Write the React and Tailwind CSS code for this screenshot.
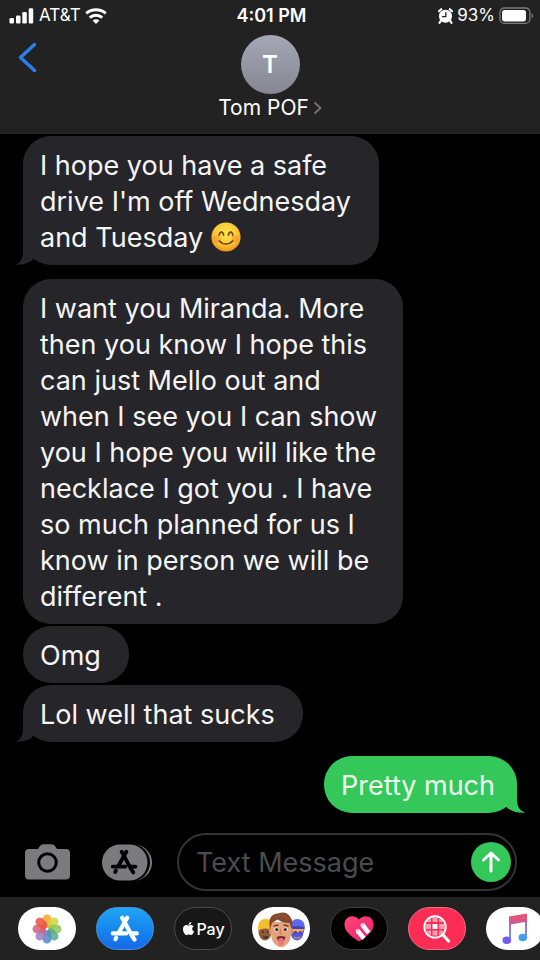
import { useState } from "react";
import { FaApple } from "react-icons/fa";

const messages = [
  {
    text: "I hope you have a safe\ndrive I'm off Wednesday\nand Tuesday ",
    emoji: true,
    tail: true,
    size: "w-[356px]",
    gap: "mt-0",
  },
  {
    text: "I want you Miranda. More\nthen you know I hope this\ncan just Mello out and\nwhen I see you I can show\nyou I hope you will like the\nnecklace I got you . I have\nso much planned for us I\nknow in person we will be\ndifferent .",
    size: "w-[380px]",
    gap: "mt-[14px]",
  },
  { text: "Omg", size: "w-[106px]", gap: "mt-0.5" },
  { text: "Lol well that sucks", tail: true, size: "w-[280px]", gap: "mt-0.5" },
  { text: "Pretty much", tail: true, mine: true, size: "w-[193px]", gap: "mt-[14px]" },
];

function SignalIcon() {
  return (
    <svg width="26" height="16" viewBox="0 0 26 16" fill="#fff" aria-hidden="true">
      <rect x="0.5" y="10" width="4.5" height="5.5" rx="1.3" />
      <rect x="7" y="7.5" width="4.5" height="8" rx="1.3" />
      <rect x="13.3" y="4" width="4.5" height="11.5" rx="1.3" />
      <rect x="19.7" y="0.3" width="4.5" height="15.2" rx="1.3" />
    </svg>
  );
}

function WifiIcon() {
  return (
    <svg width="22" height="16" viewBox="0 0 22 16" fill="none" stroke="#fff" strokeWidth="2.9" aria-hidden="true">
      <path d="M1.2 5.4C6.8.6 15.2.6 20.8 5.4" />
      <path d="M4.8 9.6c3.4-3.2 9-3.2 12.400 0" />
      <path d="M7.6 12.600c2-1.8 4.8-1.8 6.8 0L11 16z" fill="#fff" stroke="none" />
    </svg>
  );
}

function AlarmIcon() {
  return (
    <svg width="15" height="16" viewBox="0 0 15 16" aria-hidden="true">
      <circle cx="7.500" cy="8.200" r="6.500" fill="#fff" />
      <path d="M1 3.300 3.200 1.200M14 3.300l-2.200-2.100M2.800 12.800 1.600 14.800M12.200 12.800l1.200 2" stroke="#fff" strokeWidth="2.200" strokeLinecap="round" />
      <path d="M7.800 4.200v4.400H4" fill="none" stroke="#222" strokeWidth="1.300" />
    </svg>
  );
}

function BatteryIcon() {
  return (
    <svg width="35" height="18" viewBox="0 0 35 18" aria-hidden="true">
      <rect x="0.9" y="1" width="30" height="15.4" rx="4.4" fill="none" stroke="#7b7b7b" strokeWidth="1.3" />
      <rect x="3" y="3" width="24" height="11.4" rx="2.6" fill="#fff" />
      <path d="M32.6 6.2c2 .8 2 4.2 0 5z" fill="#7b7b7b" />
    </svg>
  );
}

function SmileEmoji() {
  return (
    <svg className="inline-block align-[-5px]" width="30" height="30" viewBox="0 0 30 30" role="img" aria-label="😊">
      <defs>
        <radialGradient id="face" cx="50%" cy="38%" r="62%">
          <stop offset="0" stopColor="#ffe64f" />
          <stop offset="0.6" stopColor="#fdca35" />
          <stop offset="1" stopColor="#ef9020" />
        </radialGradient>
      </defs>
      <circle cx="15" cy="15" r="14.6" fill="url(#face)" />
      <circle cx="5.8" cy="17" r="3.6" fill="#f58a35" opacity="0.5" />
      <circle cx="24.2" cy="17" r="3.6" fill="#f58a35" opacity="0.5" />
      <g fill="none" stroke="#7b4410" strokeWidth="1.7" strokeLinecap="round">
        <path d="M8.2 13.2c.5-4 3.8-4 4.4 0" />
        <path d="M17.4 13.2c.5-4 3.8-4 4.4 0" />
        <path d="M8.4 19c3.4 4 9.8 4 13.2 0" />
      </g>
    </svg>
  );
}

function Tail({ mine }) {
  return mine ? (
    <svg className="absolute -right-[8px] bottom-0" width="30" height="30" viewBox="0 0 30 30" aria-hidden="true">
      <path d="M22 0V16C22 23 24 27 30 29.700 23 30 17 28.500 13 25.500L5 16 12 0z" fill="#34c759" />
    </svg>
  ) : (
    <svg className="absolute -left-[7px] bottom-0" width="30" height="30" viewBox="0 0 30 30" aria-hidden="true">
      <path d="M7 0V16C7 23 5 27 0 29.700 6 29.800 12 28.500 16 25.500L24 16 18 0z" fill="#26252a" />
    </svg>
  );
}

function Bubble({ msg }) {
  const side = msg.mine
    ? "self-end bg-[#34c759] text-[#eefff1]"
    : "self-start bg-[#26252a] text-[#f5f5f6]";
  return (
    <div className={`relative max-w-full rounded-[28px] pl-[17px] pt-[12px] pb-[9px] ${side} ${msg.size} ${msg.gap}`}>
      {msg.tail && <Tail mine={msg.mine} />}
      <p className="relative whitespace-pre text-[27px] leading-[36px]">
        {msg.text}
        {msg.emoji && <SmileEmoji />}
      </p>
    </div>
  );
}

function StoreMark() {
  return (
    <g fill="none" strokeLinecap="round">
      <path d="M16.2 1.8 7.6 17" />
      <path d="M11.2 1.8 20.8 19.4 23.5 23.6" />
      <path d="M1.8 17.4h13.4M20.6 17.4h5.2" />
      <path d="M5.2 21.8 4.4 23.2" />
    </g>
  );
}

function CameraIcon() {
  return (
    <svg width="45" height="36" viewBox="0 0 45 36" aria-hidden="true">
      <path d="M4 5h9l2-3q1.3-1.7 3.2-1.7h8.6Q28.700.3 30 2l2 3h9q4 0 4 4v22q0 4.500-4 4.500H4q-4 0-4-4.500V9q0-4 4-4z" fill="#7b7b7d" />
      <circle cx="22.500" cy="18.500" r="8.800" fill="none" stroke="#000" strokeWidth="3" />
    </svg>
  );
}

function AppsIcon() {
  return (
    <svg width="51" height="37" viewBox="0 0 51 37" aria-hidden="true">
      <rect x="6" y="0.500" width="44" height="36" rx="18" fill="#7b7b7d" />
      <rect x="2" y="-0.500" width="46" height="38" rx="19" fill="#000" />
      <rect x="0" y="0.500" width="45.500" height="36" rx="18" fill="#7b7b7d" />
      <g transform="translate(9 6) scale(0.95)" stroke="#000" strokeWidth="4">
        <StoreMark />
      </g>
    </svg>
  );
}

const petals = ["#f6a623", "#d5d13c", "#8dc553", "#58ac8b", "#5489c7", "#9a7fc0", "#d2607f", "#ee5140"];

function PhotosIcon() {
  return (
    <svg width="32" height="32" viewBox="-16 -16 32 32" aria-hidden="true">
      {petals.map((color, i) => (
        <rect key={color} x="-4.300" y="-14.500" width="8.600" height="13.500" rx="4.300" fill={color} opacity="0.85" transform={`rotate(${i * 45})`} />
      ))}
      <circle r="1.300" fill="#fff" />
    </svg>
  );
}

function AppStoreIcon() {
  return (
    <svg width="30" height="28" viewBox="-1 -1 30 28" stroke="#fff" strokeWidth="4.200" aria-hidden="true">
      <StoreMark />
    </svg>
  );
}

function Face() {
  return (
    <svg width="54" height="40" viewBox="0 0 54 40" aria-hidden="true">
      <ellipse cx="11" cy="23" rx="6.500" ry="8.500" fill="#8b5b39" />
      <path d="M4 19q0-9 8-9 8 0 8 9l-1 2q-8-3-14 0-2 0-1-2z" fill="#f6bd2b" />
      <path d="M8 23h2M13 23h2M9 28q3 2 5-.5" stroke="#472a19" strokeWidth="1.300" />
      <ellipse cx="43" cy="23" rx="6.500" ry="8.500" fill="#5655e0" />
      <path d="M36 19q0-9 8-9 7 1 7 9l-1 3H36z" fill="#5a6af5" />
      <path d="M36 18q7-2 14 0v5q-7 3-14 0z" fill="#4143b5" />
      <path d="M37 20h13l-1 3-3-1-2 2-2-2-3 1z" fill="#eda765" />
      <path d="M40 28q3 2 6 0" stroke="#e1a270" strokeWidth="1.400" />
      <ellipse cx="17" cy="22" rx="2.300" ry="3.500" fill="#d88d68" />
      <ellipse cx="37" cy="22" rx="2.300" ry="3.500" fill="#d88d68" />
      <path d="M17 13h20v11q0 10-7 13.500-3 1.500-6 0-7-3.500-7-13.500z" fill="#e5a37c" />
      <path d="M16 20Q13 5 24 4.500q8-3 12 3 4 5 1.500 12.500l-2-6q-7 0-12-3.500L18 14z" fill="#83482e" />
      <path d="M20 9q7-5 14 0" stroke="#9b5939" fill="none" />
      <path d="m19.500 17 5-1M29.500 16l5 1" stroke="#713e27" strokeWidth="1.500" />
      <ellipse cx="22.500" cy="20.500" rx="2.200" ry="1.900" fill="#fff" />
      <ellipse cx="31.500" cy="20.500" rx="2.200" ry="1.900" fill="#fff" />
      <circle cx="22.700" cy="20.500" r="1.600" fill="#38231e" />
      <circle cx="31.300" cy="20.500" r="1.600" fill="#38231e" />
      <path d="m26.500 20-.5 5h2" stroke="#c97e5f" fill="none" />
      <path d="M22.500 28q4.500-2 9 0-1 5-4.500 5t-4.500-5z" fill="#742f32" />
      <path d="M24.500 30q2.500-2 5 0v4.500q-2.500 5-5 0z" fill="#f56e84" />
    </svg>
  );
}

function HeartIcon() {
  return (
    <svg width="30" height="28" viewBox="0 0 30 28" aria-hidden="true">
      <defs>
        <linearGradient id="heart" x1="0" y1="0" x2="1" y2="1">
          <stop stopColor="#ff4773" />
          <stop offset="1" stopColor="#f01e76" />
        </linearGradient>
      </defs>
      <path d="M15 26.500C5 20 0 15 .5 8.500 1 1 10-1.500 15 4.500 20-1.500 29 1 29.500 8.500 30 15 25 20 15 26.500z" fill="url(#heart)" />
      <g stroke="#fff" strokeWidth="4.600">
        <path d="M14 16.200 20 23.500M18.800 10.200 24.600 18" />
        <path d="M14 16.200v.01M18.800 10.200v.01" strokeLinecap="round" />
      </g>
      <g stroke="#f42a70" strokeWidth="1.100" fill="none">
        <path d="m12.600 16.600 2.600-2.200M17.400 10.600l2.600-2.200" stroke="#ffa5bd" />
      </g>
    </svg>
  );
}

function ImageSearchIcon() {
  return (
    <svg width="28" height="28" viewBox="0 0 28 28" aria-hidden="true">
      <defs>
        <clipPath id="lens">
          <circle cx="12" cy="12" r="9.500" />
        </clipPath>
      </defs>
      <g clipPath="url(#lens)" fill="#ffc5d0">
        <path d="M4 3h4v4H4zM9.500 2h5v5h-5zM16 3h4v4h-4zM2 9h6v5H2zM16 9h6v5h-6zM4 15.500h4v5H4zM9.500 15.500h5v5h-5zM16 15.500h4v5h-4z" opacity="0.75" />
        <path d="M9.500 9h5v5h-5z" fill="#fff" />
      </g>
      <circle cx="12" cy="12" r="10.700" fill="none" stroke="#fff" strokeWidth="1.900" />
      <path d="m20 20 5.500 6" stroke="#fff" strokeWidth="3.200" strokeLinecap="round" />
    </svg>
  );
}

function MusicIcon() {
  return (
    <svg width="26" height="32" viewBox="0 0 26 32" aria-hidden="true">
      <defs>
        <linearGradient id="note" x1="0" y1="0" x2="0" y2="1">
          <stop stopColor="#ef5170" />
          <stop offset="0.300" stopColor="#cf5a8b" />
          <stop offset="0.650" stopColor="#8c83da" />
          <stop offset="1" stopColor="#48a8f4" />
        </linearGradient>
      </defs>
      <path d="M7 3.500 25 .5v25h-2V9L9 11.500V28H7z" fill="url(#note)" />
      <ellipse cx="4.800" cy="27.300" rx="4.300" ry="3.700" fill="#7956f2" />
      <ellipse cx="20.800" cy="24.500" rx="4.300" ry="3.700" fill="#459ff0" />
    </svg>
  );
}

const apps = [
  { name: "Photos", style: "bg-white", icon: <PhotosIcon /> },
  { name: "App Store", style: "bg-linear-to-b from-[#20a5f5] to-[#1768e8] border border-[#4b91df]", icon: <AppStoreIcon /> },
  {
    name: "Apple Pay",
    style: "bg-[#171717] border border-[#4a4a4a] text-white text-[16px] font-medium",
    icon: (
      <>
        <FaApple size={15} />
        Pay
      </>
    ),
  },
  { name: "Memoji", style: "bg-white", icon: <Face /> },
  { name: "Digital Touch", style: "bg-black border border-[#3d3d3d]", icon: <HeartIcon /> },
  { name: "Images", style: "bg-[#fc2d55] border border-[#f96b87]", icon: <ImageSearchIcon /> },
  { name: "Music", style: "bg-white", icon: <MusicIcon /> },
];

export default function App() {
  const [text, setText] = useState("");

  return (
    <div className="flex min-h-screen flex-col overflow-hidden bg-black font-['Inter','Liberation_Sans',sans-serif]">
      <header className="bg-[#222] pb-[12px] text-white">
        <div className="grid h-[31px] grid-cols-3 items-center pl-[9px] pr-[6px] text-[17px]">
          <div className="flex items-center gap-1">
            <SignalIcon />
            <span>AT&amp;T</span>
            <WifiIcon />
          </div>
          <span className="text-center text-[18px] font-semibold">4:01 PM</span>
          <div className="flex items-center justify-end gap-1">
            <AlarmIcon />
            <span>93%</span>
            <BatteryIcon />
          </div>
        </div>
        <div className="grid grid-cols-[1fr_auto_1fr] items-start pt-1">
          <button type="button" aria-label="Back" className="ml-[18px] mt-[7px] w-fit">
            <svg width="20" height="32" viewBox="0 0 20 32" fill="none" stroke="#2a7fee" strokeWidth="3.500" strokeLinecap="round" strokeLinejoin="round" aria-hidden="true">
              <path d="M16.500 2.500 2.500 15.500 16.500 28.500" />
            </svg>
          </button>
          <button type="button" className="flex flex-col items-center">
            <span className="flex size-[59px] items-center justify-center rounded-full bg-linear-to-b from-[#a4a7b5] to-[#858792] text-[24px] font-semibold">T</span>
            <span className="flex items-center gap-1 text-[21px] leading-[28px]">
              Tom POF
              <svg width="9" height="14" viewBox="0 0 9 14" fill="none" stroke="#77777b" strokeWidth="1.800" aria-hidden="true">
                <path d="m1.500 1.500 6 5.500-6 5.500" />
              </svg>
            </span>
          </button>
        </div>
      </header>

      <main className="flex flex-1 flex-col pl-[23px] pr-[23px] pt-0.5">
        {messages.map((msg) => (
          <Bubble key={msg.text} msg={msg} />
        ))}
      </main>

      <form className="flex items-center pb-[6px] pl-[25px] pr-[23px] pt-5" onSubmit={(e) => e.preventDefault()}>
        <button type="button" aria-label="Camera">
          <CameraIcon />
        </button>
        <button type="button" aria-label="Apps" className="ml-8 mr-6">
          <AppsIcon />
        </button>
        <div className="flex h-[58px] min-w-0 flex-1 items-center rounded-full border-2 border-[#333335] pl-[17px] pr-1">
          <input
            type="text"
            aria-label="Text Message"
            placeholder="Text Message"
            className="min-w-0 flex-1 bg-transparent pt-0.5 text-[27px] text-white outline-none placeholder:text-[#4c4c50]"
            value={text}
            onChange={(e) => setText(e.target.value)}
          />
          <button type="submit" aria-label="Send" className="flex size-10 shrink-0 items-center justify-center rounded-full bg-[#34c759]">
            <svg width="20" height="22" viewBox="0 0 20 22" fill="none" stroke="#fff" strokeWidth="3" strokeLinecap="round" strokeLinejoin="round" aria-hidden="true">
              <path d="M10 20V2M2.500 9 10 2l7.500 7" />
            </svg>
          </button>
        </div>
      </form>

      <nav className="flex h-[63px] gap-5 overflow-hidden bg-[#222] pl-[18px] pt-[10px]">
        {apps.map((app) => (
          <button
            key={app.name}
            type="button"
            aria-label={app.name}
            className={`flex h-[43px] w-[58px] shrink-0 items-center justify-center rounded-full ${app.style}`}
          >
            {app.icon}
          </button>
        ))}
      </nav>
    </div>
  );
}
